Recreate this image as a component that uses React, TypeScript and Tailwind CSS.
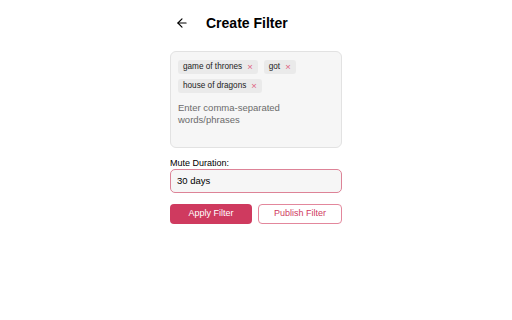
import { ArrowLeft } from "lucide-react";

const tags = ["game of thrones", "got", "house of dragons"];

export default function App() {
  return (
    <div className="flex h-[320px] w-full justify-center bg-white font-['Liberation_Sans',Arial,sans-serif] text-black">
      <div className="w-[172px]">
        <div className="flex h-[45px] items-center gap-[17px] pl-[5px] pt-[1px]">
          <ArrowLeft className="h-[14px] w-[14px]" strokeWidth={2} />
          <h1 className="text-[14px] font-bold">Create Filter</h1>
        </div>

        <div className="mt-[6px] h-[97px] rounded-[6px] border border-[#e2e2e2] bg-[#f6f6f6] px-[7px] pt-[8px]">
          <div className="flex flex-wrap gap-x-[6px] gap-y-[5px]">
            {tags.map((tag) => (
              <span
                key={tag}
                className="flex h-[14px] items-center gap-[5px] rounded-[3px] bg-[#eaeaea] px-[5px] text-[8.2px] text-[#222]"
              >
                {tag}
                <span className="text-[9.5px] leading-none text-[#e0607e]">×</span>
              </span>
            ))}
          </div>
          <p className="mt-[9px] w-[150px] text-[9.5px] leading-[12px] text-[#6b6b6b]">
            Enter comma-separated words/phrases
          </p>
        </div>

        <div className="mt-[10px] text-[9px] leading-[10px]">Mute Duration:</div>
        <div className="mt-[1px] flex h-[24px] items-center rounded-[5px] border border-[#dd8397] bg-[#f6f6f6] px-[6px] text-[9.5px]">
          30 days
        </div>

        <div className="mt-[11px] flex gap-[6px]">
          <button className="h-[20px] w-[82px] rounded-[4px] bg-[#cf3a5f] text-[9px] text-white">
            Apply Filter
          </button>
          <button className="h-[20px] flex-1 rounded-[4px] border border-[#e3879c] bg-white text-[9px] text-[#cf3a5f]">
            Publish Filter
          </button>
        </div>
      </div>
    </div>
  );
}
